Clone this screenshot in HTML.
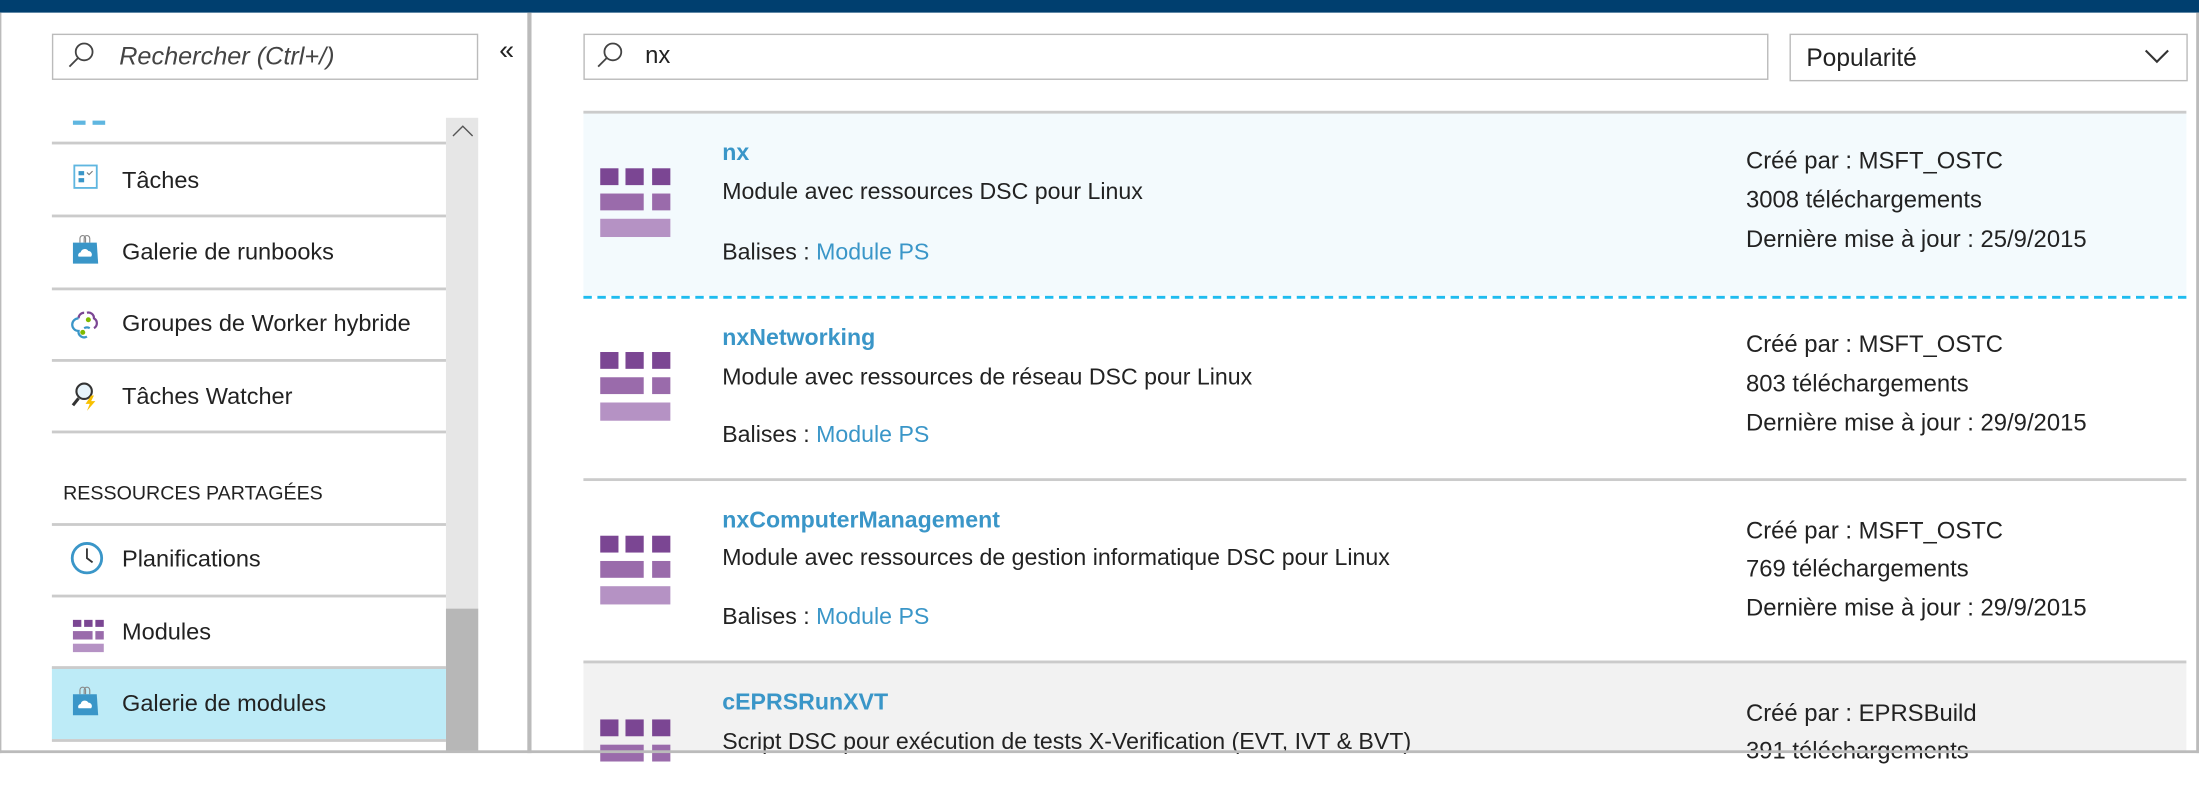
<!DOCTYPE html>
<html><head><meta charset="utf-8"><style>
html,body{margin:0;padding:0;width:2199px;height:752px;overflow:hidden;background:#fff}
#w{position:absolute;left:0;top:0;width:1568px;height:537px;transform:scale(1.40242);transform-origin:0 0;font-family:"Liberation Sans",sans-serif;color:#222;font-size:16.5px}
.a{position:absolute}
.t{position:absolute;white-space:nowrap;line-height:20px}
.hl{position:absolute;height:2px;background:#cbcbcb}
.mi{position:absolute;width:50px;height:50px}
.mi i{position:absolute;display:block}
.blue{color:#3a96c8}
.r{font-size:17px}
.n{font-size:16.8px}
</style></head><body><div id="w">
<div class="a" style="left:0;top:0;width:1568px;height:9px;background:#003f6f"></div>
<div class="a" style="left:0;top:9px;width:1px;height:528px;background:#bbb"></div>
<div class="a" style="left:1566px;top:9px;width:2px;height:528px;background:#bbb"></div>
<!-- left search -->
<div class="a" style="left:37px;top:24px;width:302px;height:31px;border:1.5px solid #bbb"></div>
<svg class="a" style="left:47px;top:28px" width="22" height="22" viewBox="0 0 22 22"><circle cx="13" cy="9" r="6" fill="none" stroke="#444" stroke-width="1.3"/><path d="M8.8 13.2L2.5 19.5" stroke="#444" stroke-width="1.3"/></svg>
<div class="t" style="left:85px;top:30px;font-style:italic;color:#444;font-size:18px">Rechercher (Ctrl+/)</div>
<div class="t" style="left:356px;top:27px;font-size:19px;color:#222">«</div>
<div class="a" style="left:376px;top:9px;width:3px;height:528px;background:#bbb"></div>
<!-- scrollbar -->
<div class="a" style="left:318px;top:84px;width:23px;height:452px;background:#e6e6e6"></div>
<div class="a" style="left:318px;top:434px;width:23px;height:102px;background:#b7b7b7"></div>
<svg class="a" style="left:321px;top:88px" width="18" height="12"><path d="M2 9L9 2L16 9" fill="none" stroke="#555" stroke-width="1"/></svg>
<div class="a" style="left:52px;top:86px;width:9px;height:3px;background:#5fb6e0"></div>
<div class="a" style="left:66px;top:86px;width:9px;height:3px;background:#5fb6e0"></div>
<div class="hl" style="left:37px;top:101px;width:281px"></div>
<div class="hl" style="left:37px;top:153px;width:281px"></div>
<div class="hl" style="left:37px;top:205px;width:281px"></div>
<div class="hl" style="left:37px;top:256px;width:281px"></div>
<div class="hl" style="left:37px;top:307px;width:281px"></div>
<div class="hl" style="left:37px;top:373px;width:281px"></div>
<div class="hl" style="left:37px;top:424px;width:281px"></div>
<div class="a" style="left:37px;top:476px;width:281px;height:51px;background:#bdebf7"></div>
<div class="hl" style="left:37px;top:475px;width:281px"></div>
<div class="hl" style="left:37px;top:527px;width:281px"></div>
<!-- nav icons -->
<svg class="a" style="left:52px;top:117px" width="18" height="18"><rect x="1" y="1" width="16" height="16" fill="#fff" stroke="#5fb6e0" stroke-width="1.3"/><rect x="4" y="5" width="4" height="3" fill="#3a96c8"/><rect x="4" y="10" width="4" height="3" fill="#3a96c8"/><path d="M10 6l1.5 1.5L14 5" stroke="#777" stroke-width=".8" fill="none"/></svg>
<svg class="a" style="left:51px;top:167px" width="20" height="22"><path d="M6 6V3a2 2 0 0 1 4 0v3M9 6V3a2 2 0 0 1 4 0v3" fill="none" stroke="#888" stroke-width=".8"/><path d="M1 6h17l1 15H1z" fill="#3a96c8"/><path d="M5 16h9a2.5 2.5 0 0 0-2-4 3 3 0 0 0-5.5 1A2 2 0 0 0 5 16z" fill="#fff"/></svg>
<svg class="a" style="left:50px;top:220px" width="22" height="24"><path d="M12 3a4 4 0 0 1 5 4a4 4 0 0 1 0 7" fill="none" stroke="#7b4693" stroke-width="1.6"/><path d="M10 3a4 4 0 0 0-4 4" fill="none" stroke="#7b4693" stroke-width="1.6"/><path d="M6 7a4.5 4.5 0 0 0 0 9a4 4 0 0 0 6 4" fill="none" stroke="#3a96c8" stroke-width="1.6"/><path d="M14 14a4 4 0 0 0-4 0" fill="none" stroke="#3a96c8" stroke-width="1.6"/><circle cx="13" cy="8" r="1.8" fill="#7fba00"/><circle cx="9" cy="17" r="1.8" fill="#7fba00"/></svg>
<svg class="a" style="left:50px;top:271px" width="22" height="22"><circle cx="10" cy="8" r="5.5" fill="#e7f3fa" stroke="#333" stroke-width="1.5"/><path d="M6 13L2 18" stroke="#333" stroke-width="2.2"/><path d="M15 11l-4 6h3l-2 5 6-7h-3l2-4z" fill="#f8c000"/></svg>
<svg class="a" style="left:50px;top:386px" width="24" height="24"><circle cx="12" cy="12" r="10.5" fill="#fff" stroke="#3a96c8" stroke-width="2"/><path d="M12 5v7l4 3" stroke="#333" stroke-width="1.3" fill="none"/></svg>
<div class="mi" style="left:52px;top:442px;width:23px;height:23px">
<i style="left:0;top:0;width:6px;height:5px;background:#7b4693"></i><i style="left:8px;top:0;width:6px;height:5px;background:#7b4693"></i><i style="left:16px;top:0;width:6px;height:5px;background:#7b4693"></i>
<i style="left:0;top:8px;width:14px;height:6px;background:#9a6bab"></i><i style="left:16px;top:8px;width:6px;height:6px;background:#9a6bab"></i>
<i style="left:0;top:17px;width:22px;height:6px;background:#b592c4"></i></div>
<svg class="a" style="left:51px;top:489px" width="20" height="22"><path d="M6 6V3a2 2 0 0 1 4 0v3M9 6V3a2 2 0 0 1 4 0v3" fill="none" stroke="#888" stroke-width=".8"/><path d="M1 6h17l1 15H1z" fill="#3a96c8"/><path d="M5 16h9a2.5 2.5 0 0 0-2-4 3 3 0 0 0-5.5 1A2 2 0 0 0 5 16z" fill="#fff"/></svg>
<div class="t n" style="left:87px;top:119px">Tâches</div>
<div class="t n" style="left:87px;top:170px">Galerie de runbooks</div>
<div class="t n" style="left:87px;top:221px">Groupes de Worker hybride</div>
<div class="t n" style="left:87px;top:273px">Tâches Watcher</div>
<div class="t" style="left:45px;top:341px;font-size:14px">RESSOURCES PARTAGÉES</div>
<div class="t n" style="left:87px;top:389px">Planifications</div>
<div class="t n" style="left:87px;top:441px">Modules</div>
<div class="t n" style="left:87px;top:492px">Galerie de modules</div>
<!-- right -->
<div class="a" style="left:416px;top:24px;width:843px;height:31px;border:1.5px solid #bbb"></div>
<svg class="a" style="left:424px;top:28px" width="22" height="22" viewBox="0 0 22 22"><circle cx="13" cy="9" r="6" fill="none" stroke="#444" stroke-width="1.3"/><path d="M8.8 13.2L2.5 19.5" stroke="#444" stroke-width="1.3"/></svg>
<div class="t" style="left:460px;top:30px;font-size:17px">nx</div>
<div class="a" style="left:1276px;top:24px;width:282px;height:32px;border:1.5px solid #bbb"></div>
<div class="t" style="left:1288px;top:31px;font-size:17.5px">Popularité</div>
<svg class="a" style="left:1528px;top:33px" width="20" height="14"><path d="M2 3L10 11L18 3" fill="none" stroke="#333" stroke-width="1.5"/></svg>

<div class="a" style="left:416px;top:80px;width:1143px;height:131px;background:#f3fafd"></div>
<div class="hl" style="left:416px;top:79px;width:1143px"></div>
<div class="a" style="left:416px;top:211px;width:1143px;border-top:2px dashed #1ebcef"></div>
<div class="hl" style="left:416px;top:341px;width:1143px"></div>
<div class="a" style="left:416px;top:472px;width:1143px;height:64px;background:#f2f2f2"></div>
<div class="hl" style="left:416px;top:471px;width:1143px"></div>

<!-- row icons -->
<div class="mi" style="left:428px;top:120px"><i style="left:0;top:0;width:13px;height:12px;background:#7b4693"></i><i style="left:18px;top:0;width:13px;height:12px;background:#7b4693"></i><i style="left:37px;top:0;width:13px;height:12px;background:#7b4693"></i><i style="left:0;top:18px;width:31px;height:12px;background:#9a6bab"></i><i style="left:37px;top:18px;width:13px;height:12px;background:#9a6bab"></i><i style="left:0;top:36px;width:50px;height:13px;background:#b592c4"></i></div>
<div class="mi" style="left:428px;top:251px"><i style="left:0;top:0;width:13px;height:12px;background:#7b4693"></i><i style="left:18px;top:0;width:13px;height:12px;background:#7b4693"></i><i style="left:37px;top:0;width:13px;height:12px;background:#7b4693"></i><i style="left:0;top:18px;width:31px;height:12px;background:#9a6bab"></i><i style="left:37px;top:18px;width:13px;height:12px;background:#9a6bab"></i><i style="left:0;top:36px;width:50px;height:13px;background:#b592c4"></i></div>
<div class="mi" style="left:428px;top:382px"><i style="left:0;top:0;width:13px;height:12px;background:#7b4693"></i><i style="left:18px;top:0;width:13px;height:12px;background:#7b4693"></i><i style="left:37px;top:0;width:13px;height:12px;background:#7b4693"></i><i style="left:0;top:18px;width:31px;height:12px;background:#9a6bab"></i><i style="left:37px;top:18px;width:13px;height:12px;background:#9a6bab"></i><i style="left:0;top:36px;width:50px;height:13px;background:#b592c4"></i></div>
<div class="mi" style="left:428px;top:513px"><i style="left:0;top:0;width:13px;height:12px;background:#7b4693"></i><i style="left:18px;top:0;width:13px;height:12px;background:#7b4693"></i><i style="left:37px;top:0;width:13px;height:12px;background:#7b4693"></i><i style="left:0;top:18px;width:31px;height:12px;background:#9a6bab"></i><i style="left:37px;top:18px;width:13px;height:12px;background:#9a6bab"></i></div>

<div class="t blue" style="left:515px;top:99px;font-weight:bold;font-size:16.5px">nx</div>
<div class="t" style="left:515px;top:127px">Module avec ressources DSC pour Linux</div>
<div class="t" style="left:515px;top:170px">Balises : <span class="blue">Module PS</span></div>
<div class="t r" style="left:1245px;top:105px">Créé par : MSFT_OSTC</div>
<div class="t r" style="left:1245px;top:133px">3008 téléchargements</div>
<div class="t r" style="left:1245px;top:161px">Dernière mise à jour : 25/9/2015</div>

<div class="t blue" style="left:515px;top:231px;font-weight:bold;font-size:16.5px">nxNetworking</div>
<div class="t" style="left:515px;top:259px">Module avec ressources de réseau DSC pour Linux</div>
<div class="t" style="left:515px;top:300px">Balises : <span class="blue">Module PS</span></div>
<div class="t r" style="left:1245px;top:236px">Créé par : MSFT_OSTC</div>
<div class="t r" style="left:1245px;top:264px">803 téléchargements</div>
<div class="t r" style="left:1245px;top:292px">Dernière mise à jour : 29/9/2015</div>

<div class="t blue" style="left:515px;top:361px;font-weight:bold;font-size:16.5px">nxComputerManagement</div>
<div class="t" style="left:515px;top:388px">Module avec ressources de gestion informatique DSC pour Linux</div>
<div class="t" style="left:515px;top:430px">Balises : <span class="blue">Module PS</span></div>
<div class="t r" style="left:1245px;top:369px">Créé par : MSFT_OSTC</div>
<div class="t r" style="left:1245px;top:396px">769 téléchargements</div>
<div class="t r" style="left:1245px;top:424px">Dernière mise à jour : 29/9/2015</div>

<div class="t blue" style="left:515px;top:491px;font-weight:bold;font-size:16.5px">cEPRSRunXVT</div>
<div class="t" style="left:515px;top:519px">Script DSC pour exécution de tests X-Verification (EVT, IVT &amp; BVT)</div>
<div class="t r" style="left:1245px;top:499px">Créé par : EPRSBuild</div>
<div class="t r" style="left:1245px;top:526px">391 téléchargements</div>
<div class="a" style="left:0;top:535px;width:1568px;height:2px;background:#bbb"></div>
</div></body></html>
